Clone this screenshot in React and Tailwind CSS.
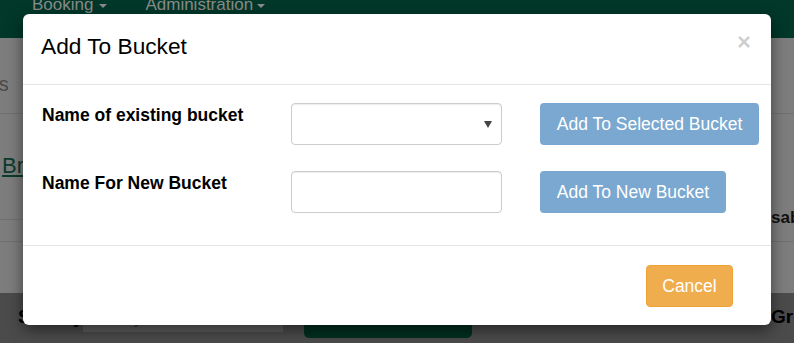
export default function App() {
  return (
    <div className="relative w-[794px] h-[343px] overflow-hidden font-['Liberation_Sans',Arial,sans-serif] bg-[#7d7d7d]">
      {/* Background page (dimmed) */}
      <div className="flex flex-col h-full">
        <div className="h-[38px] bg-[#01382a] flex items-start gap-[38px] pl-[32px] shrink-0">
          <div className="-mt-[5px] flex items-center gap-[6px] text-[17px] leading-[20px] text-[#8b8b8b]">
            <span>Booking</span>
            <span className="w-0 h-0 border-l-[4px] border-r-[4px] border-t-[4px] border-l-transparent border-r-transparent border-t-[#8b8b8b] mt-[2px]" />
          </div>
          <div className="-mt-[5px] flex items-center gap-[4px] text-[17px] leading-[20px] text-[#8b8b8b]">
            <span>Administration</span>
            <span className="w-0 h-0 border-l-[4px] border-r-[4px] border-t-[4px] border-l-transparent border-r-transparent border-t-[#8b8b8b] mt-[2px]" />
          </div>
        </div>
        <div className="h-[255px] flex flex-col shrink-0">
          <div className="h-[76px] border-b border-[#717171] flex items-end pb-[18px] overflow-hidden">
            <span className="text-[20px] leading-[22px] text-[#4a4a4a] -ml-[58px] whitespace-nowrap">Results</span>
          </div>
          <div className="h-[106px] border-b border-[#717171] relative">
            <div className="pt-[40px] pl-[2px] text-[22px] leading-[24px] text-[#0b3b2c] underline whitespace-nowrap">Browse</div>
            <div className="absolute left-[754px] top-[94px] text-[17px] leading-[20px] font-bold text-[#111] whitespace-nowrap">Disabled</div>
          </div>
          <div className="h-[22px] border-b border-[#717171]" />
          <div className="flex-1" />
        </div>
        <div className="flex-1 bg-[#4b4b4b] flex items-start pt-[10px] pl-[18px] whitespace-nowrap">
          <span className="shrink-0 w-[65px] mt-[2px] text-[19px] leading-[24px] font-bold text-black">Sort by</span>
          <div className="shrink-0 mt-[4px] w-[200px] h-[25px] bg-[#5e5e5e] text-[16px] text-[#333] pl-[8px]">Sort by Relevance</div>
          <div className="shrink-0 ml-[21px] -mt-[3px] w-[168px] h-[38px] bg-[#01301f] rounded-[5px] text-[17px] font-bold text-[#0c4a35] flex items-center justify-center">Show more Details</div>
          <div className="shrink-0 ml-[26px] mt-[6px] w-[14px] h-[14px] rounded-[2px] bg-[#5a5a5a]" />
          <span className="shrink-0 w-[250px] ml-[9px] mt-[2px] text-[18px] leading-[24px] font-bold text-black">Limit to Available Items</span>
          <span className="shrink-0 mt-[2px] text-[19px] leading-[24px] font-bold text-black">Group</span>
        </div>
      </div>

      {/* Modal */}
      <div className="absolute left-[23px] top-[14px] w-[748px] h-[311px] bg-white rounded-[6px] shadow-[0_5px_15px_rgba(0,0,0,0.5)] flex flex-col">
        <div className="h-[71px] border-b border-[#e5e5e5] flex items-start justify-between pl-[18px] pr-[20px] shrink-0">
          <h4 className="pt-[19px] text-[22.7px] leading-[26px] text-black">Add To Bucket</h4>
          <span className="pt-[15px] text-[24px] leading-[26px] font-bold text-black/20">×</span>
        </div>
        <div className="h-[161px] border-b border-[#e5e5e5] pt-[18px] pl-[19px] flex flex-col gap-[26px] shrink-0">
          <div className="flex items-start">
            <div className="w-[249px] pt-[1.5px] text-[17.5px] leading-[20px] font-bold text-black whitespace-nowrap">Name of existing bucket</div>
            <div className="w-[211px] h-[42px] border border-[#cccccc] rounded-[4px] shadow-[inset_0_1px_1px_rgba(0,0,0,0.075)] flex items-center justify-end pr-[9px]">
              <svg width="8" height="7" viewBox="0 0 8 7">
                <polygon points="0,0 8,0 4,7" fill="#444" />
              </svg>
            </div>
            <button className="ml-[38px] h-[42px] w-[219px] bg-[#7aa8d0] rounded-[4px] text-white text-[17.5px] leading-[20px] px-4 whitespace-nowrap">Add To Selected Bucket</button>
          </div>
          <div className="flex items-start">
            <div className="w-[249px] pt-[2px] text-[17.5px] leading-[20px] font-bold text-black whitespace-nowrap">Name For New Bucket</div>
            <div className="w-[211px] h-[42px] border border-[#cccccc] rounded-[4px] shadow-[inset_0_1px_1px_rgba(0,0,0,0.075)]" />
            <button className="ml-[38px] h-[42px] w-[186px] bg-[#7aa8d0] rounded-[4px] text-white text-[17.5px] leading-[20px] px-4 whitespace-nowrap">Add To New Bucket</button>
          </div>
        </div>
        <div className="flex-1 flex justify-end items-start pt-[19px] pr-[38px]">
          <button className="h-[42px] w-[87px] bg-[#f0ad4e] border border-[#eea236] rounded-[4px] text-white text-[17.5px] leading-[20px]">Cancel</button>
        </div>
      </div>
    </div>
  );
}
